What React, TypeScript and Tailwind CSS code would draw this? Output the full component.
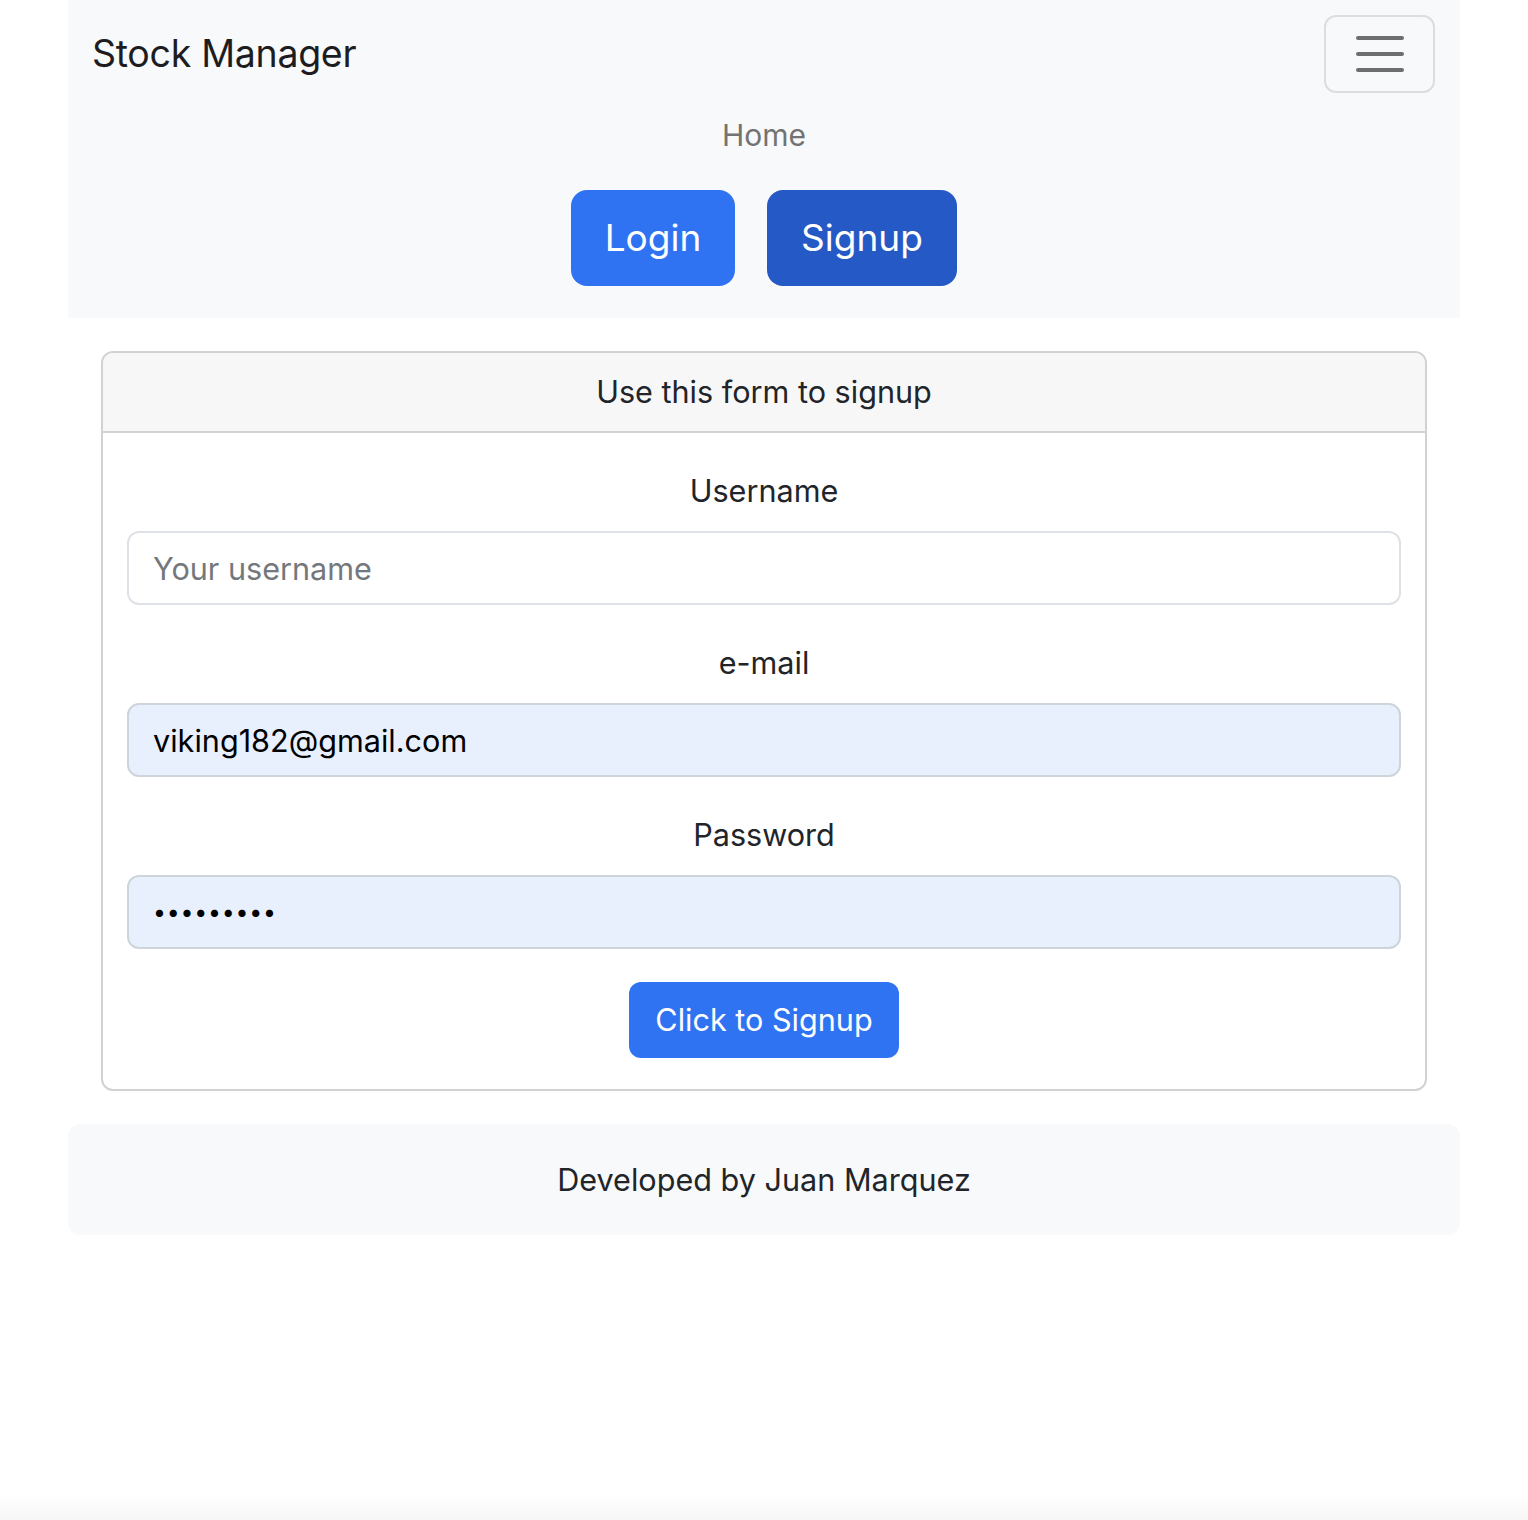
import React from 'react'

export default function App() {
  const font = { fontFamily: 'Inter, "Noto Sans", sans-serif' }

  return (
    <div className="min-h-screen flex flex-col bg-white text-[#212529]" style={font}>
      <div className="mx-[68px]">
        {/* NAVBAR */}
        <nav className="bg-[#f8f9fa] pt-[15px] pb-[32px]">
          <div className="h-[78px] flex items-center justify-between pl-[24px] pr-[25px]">
            <span className="text-[37.5px] leading-none text-[#1d1d1f] tracking-[-0.3px]">Stock Manager</span>
            <button className="w-[111px] h-[78px] border-2 border-[#dddddd] rounded-[12px] flex flex-col items-center justify-center gap-[12px]">
              <span className="block w-[48px] h-[4px] rounded-full bg-[#6e6e6e]" />
              <span className="block w-[48px] h-[4px] rounded-full bg-[#6e6e6e]" />
              <span className="block w-[48px] h-[4px] rounded-full bg-[#6e6e6e]" />
            </button>
          </div>
          <div className="h-[84px] flex items-center justify-center">
            <span className="text-[30px] text-[#737373]">Home</span>
          </div>
          <div className="mt-[13px] flex justify-center gap-[32px]">
            <button className="h-[96px] w-[164px] rounded-[16px] bg-[#2f73f3] text-white text-[37px]">Login</button>
            <button className="h-[96px] w-[190px] rounded-[16px] bg-[#2459c6] text-white text-[37px]">Signup</button>
          </div>
        </nav>

        {/* CARD */}
        <div className="mx-[33px] mt-[33px] border-2 border-[#d2d2d2] rounded-[12px] overflow-hidden">
          <div className="h-[80px] bg-[#f7f7f7] border-b-2 border-[#d2d2d2] flex items-center justify-center">
            <span className="text-[30.6px]">Use this form to signup</span>
          </div>
          <form className="px-[24px] pt-[34px] pb-[31px] flex flex-col">
            <label className="h-[48px] flex items-center justify-center text-[30.6px] mb-[16px]">Username</label>
            <input
              className="h-[74px] w-full border-2 border-[#dee2e6] rounded-[12px] px-[24px] text-[30.6px] placeholder:text-[#74787c] outline-none"
              placeholder="Your username"
            />
            <label className="mt-[34px] h-[48px] flex items-center justify-center text-[30.6px] mb-[16px]">e-mail</label>
            <input
              className="h-[74px] w-full border-2 border-[#ced4da] bg-[#e8f0fe] rounded-[12px] px-[24px] text-[30.6px] text-black outline-none"
              defaultValue="viking182@gmail.com"
              readOnly
            />
            <label className="mt-[34px] h-[48px] flex items-center justify-center text-[30.6px] mb-[16px]">Password</label>
            <input
              type="password"
              className="h-[74px] w-full border-2 border-[#ced4da] bg-[#e8f0fe] rounded-[12px] px-[24px] text-[23px] tracking-[0.8px] text-black outline-none"
              defaultValue="123456789"
              readOnly
            />
            <div className="mt-[33px] flex justify-center">
              <button type="button" className="h-[76px] w-[270px] rounded-[12px] bg-[#2f73f3] text-white text-[30.6px]">
                Click to Signup
              </button>
            </div>
          </form>
        </div>

        {/* FOOTER */}
        <footer className="mt-[33px] h-[111px] bg-[#f8f9fa] rounded-[12px] flex items-center justify-center">
          <span className="text-[30.6px]">Developed by Juan Marquez</span>
        </footer>
      </div>
      <div className="flex-1" />
      <div className="h-[24px] bg-gradient-to-b from-white to-[#f6f6f6]" />
    </div>
  )
}
